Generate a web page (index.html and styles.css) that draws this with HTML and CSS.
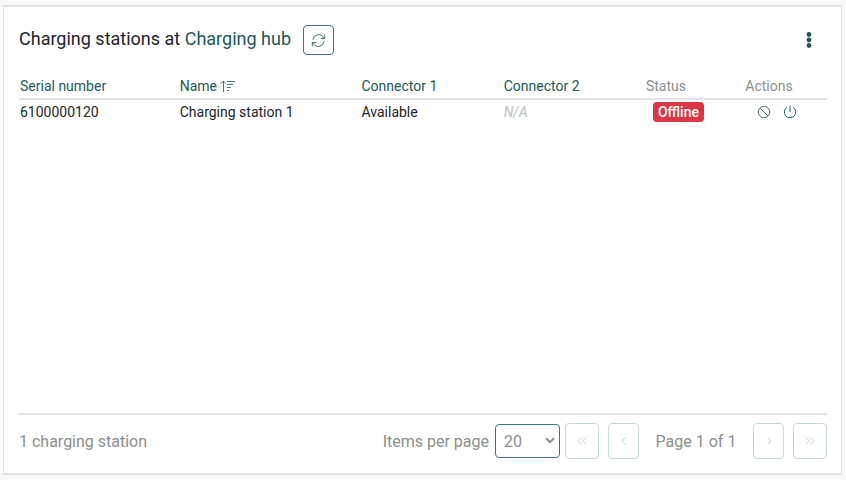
FILE: index.html
```html
<!DOCTYPE html>
<html lang="en">
<head>
<meta charset="utf-8">
<title>Charging stations</title>
<link rel="stylesheet" href="styles.css">
</head>
<body>
<main class="card">
  <header class="card-header">
    <h1 class="title">Charging stations at <a href="#hub">Charging hub</a></h1>
    <button class="btn refresh" type="button" aria-label="Refresh">
      <svg class="icon" viewBox="0 0 16 16"><path d="M2 7.2A6 6 0 0 1 13.4 5.2M14.6 1.8v4.1h-4.1M14 8.8A6 6 0 0 1 2.6 10.8M1.4 14.2v-4.1h4.1"/></svg>
    </button>
    <button class="menu" type="button" aria-label="More options">
      <svg viewBox="0 0 6 18"><circle cx="3" cy="3.5" r="2.4"/><circle cx="3" cy="9" r="2.4"/><circle cx="3" cy="14.5" r="2.4"/></svg>
    </button>
  </header>
  <section class="content">
    <table class="stations">
      <thead>
        <tr>
          <th class="col-serial"><a href="#serial">Serial number</a></th>
          <th class="col-name"><a href="#name">Name <svg class="sort" viewBox="0 0 15 12"><path d="M3.5 12V1M.8 3.8L3.5 1l2.7 2.8M7 1.5h8M7 4.5h6M7 7.5h4M7 10.5h2"/></svg></a></th>
          <th class="col-first"><a href="#connector-1">Connector 1</a></th>
          <th class="col-second"><a href="#connector-2">Connector 2</a></th>
          <th class="col-status">Status</th>
          <th class="col-actions">Actions</th>
        </tr>
      </thead>
      <tbody>
        <tr>
          <td>6100000120</td>
          <td>Charging station 1</td>
          <td>Available</td>
          <td class="missing">N/A</td>
          <td class="status"><span class="badge">Offline</span></td>
          <td>
            <div class="actions">
              <button class="action" type="button" aria-label="Disable"><svg class="icon" viewBox="0 0 14 14"><circle cx="7" cy="7" r="5.7"/><path d="M3 3l8 8"/></svg></button>
              <button class="action power" type="button" aria-label="Restart"><svg class="icon" viewBox="0 0 14 14"><path d="M4 2.2a5.7 5.7 0 1 0 6 0M7 .6v6.6"/></svg></button>
            </div>
          </td>
        </tr>
      </tbody>
    </table>
  </section>
  <footer class="card-footer">
    <span class="count">1 charging station</span>
    <label class="per-page" for="page-size">Items per page</label>
    <div class="select-box">
      <select id="page-size"><option>20</option><option>50</option><option>100</option></select>
      <svg class="chevron" viewBox="0 0 10 7"><path d="M1 1.2l4 4 4-4"/></svg>
    </div>
    <nav class="pager" aria-label="Pages">
      <button class="btn page wide" type="button" aria-label="First page" disabled><svg viewBox="0 0 10 10"><path d="M5 1.5L1.5 5 5 8.5M9 1.5L5.5 5 9 8.5"/></svg></button>
      <button class="btn page" type="button" aria-label="Previous page" disabled><svg viewBox="0 0 10 10"><path d="M6.5 1.5L3 5l3.5 3.5"/></svg></button>
      <span class="position">Page 1 of 1</span>
      <button class="btn page" type="button" aria-label="Next page" disabled><svg viewBox="0 0 10 10"><path d="M3.5 1.5L7 5 3.5 8.5"/></svg></button>
      <button class="btn page wide" type="button" aria-label="Last page" disabled><svg viewBox="0 0 10 10"><path d="M1 1.5L4.5 5 1 8.5M5 1.5L8.5 5 5 8.5"/></svg></button>
    </nav>
  </footer>
</main>
</body>
</html>
```
FILE: styles.css
```css
* {
  box-sizing: border-box;
}

body {
  display: flex;
  min-height: 100vh;
  margin: 0;
  padding: 5px 4px 5px 3px;
  background: #f8f8f8;
  color: #212529;
  font-family: Roboto, "Liberation Sans", sans-serif;
  font-size: 14px;
}

button,
select {
  margin: 0;
  font: inherit;
}

a {
  color: #1b5a58;
  text-decoration: none;
}

svg {
  display: block;
  fill: none;
  stroke: currentColor;
}

.card {
  display: flex;
  flex: 1;
  flex-direction: column;
  min-width: 0;
  padding: 18px 14px 14px 15px;
  border: solid #e4e4e4;
  border-width: 2px 1px;
  background: #fff;
}

.card-header {
  display: flex;
  align-items: center;
  height: 30px;
}

.title {
  margin: 0;
  padding-bottom: 2px;
  font-size: 18px;
  font-weight: 400;
  line-height: 24px;
}

.btn {
  display: flex;
  align-items: center;
  justify-content: center;
  padding: 0;
  border: 1px solid #377a76;
  border-radius: 4px;
  background: #fff;
  color: #1b5a58;
}

.refresh {
  width: 31px;
  height: 30px;
  margin-left: 12px;
}

.refresh .icon {
  width: 15px;
  height: 15px;
  stroke-width: 0.9;
}

.menu {
  display: flex;
  margin-left: auto;
  padding: 0 15px;
  border: 0;
  background: none;
  color: #1b5a58;
}

.menu svg {
  width: 6px;
  height: 18px;
  fill: currentColor;
  stroke: none;
}

.content {
  flex: 1;
  padding-top: 20px;
}

.stations {
  width: 100%;
  border-collapse: separate;
  border-spacing: 0;
  table-layout: fixed;
}

.stations th,
.stations td {
  height: 24px;
  padding: 0 8px;
  font-weight: 400;
  line-height: 20px;
  text-align: left;
  white-space: nowrap;
}

.stations th {
  height: 25px;
  padding-bottom: 2px;
  border-bottom: 2px solid #e4e4e4;
  color: #8a8f8d;
}

.stations th:first-child,
.stations td:first-child {
  padding-left: 1px;
}

.col-serial { width: 18.9%; }
.col-name { width: 22.5%; }
.col-first { width: 17.6%; }
.col-second { width: 17.6%; }
.col-status { width: 12.3%; }
.col-actions { width: 11.1%; }

.sort {
  display: inline-block;
  width: 15px;
  height: 12px;
  stroke-width: 0.8;
  vertical-align: -1px;
}

.stations .missing {
  color: #c8cbca;
  font-style: italic;
  font-weight: 500;
}

.stations .status {
  padding-left: 15px;
}

.badge {
  display: inline-block;
  padding: 0 5px;
  border-radius: 4px;
  background: #dc3545;
  color: #fff;
  font-weight: 500;
}

.actions {
  display: flex;
  gap: 12px;
  padding-left: 12px;
}

.action {
  padding: 0;
  border: 0;
  background: none;
  color: #52716f;
}

.action.power {
  color: #1b5a58;
}

.action .icon {
  width: 14px;
  height: 14px;
}

.card-footer {
  display: flex;
  align-items: center;
  padding-top: 8px;
  border-top: 2px solid #e4e4e4;
  color: #8a8f8d;
  font-size: 16px;
  white-space: nowrap;
}

.per-page {
  margin-left: auto;
}

.select-box {
  position: relative;
  margin: 0 5px 0 6px;
}

.select-box select {
  display: block;
  width: 65px;
  height: 34px;
  padding: 0 8px;
  border: 1px solid #377a76;
  border-radius: 4px;
  appearance: none;
  background: #fff;
  color: #8a8f8d;
}

.chevron {
  position: absolute;
  top: 13px;
  right: 5px;
  width: 10px;
  height: 7px;
  stroke-width: 2;
  pointer-events: none;
}

.pager {
  display: flex;
  align-items: center;
  gap: 9px;
}

.page {
  width: 31px;
  height: 36px;
  border-color: #c8dad8;
  color: #c0d4d2;
}

.page.wide {
  width: 34px;
}

.page svg {
  width: 10px;
  height: 10px;
}

.position {
  min-width: 96px;
  text-align: center;
}
```
